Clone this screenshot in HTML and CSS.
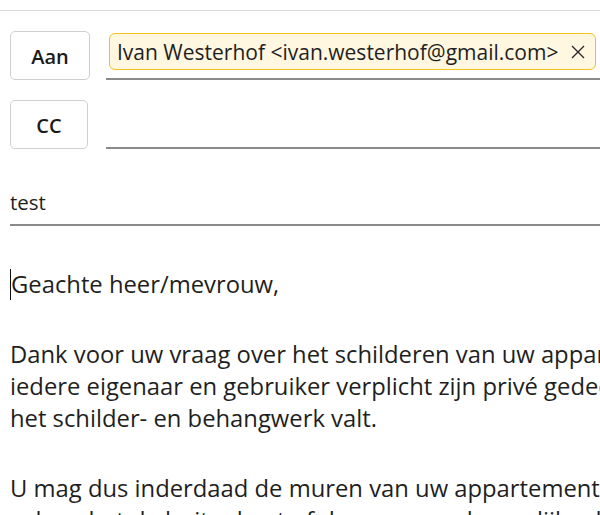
FILE: index.html
```html
<!DOCTYPE html>
<html lang="nl">
<head>
<meta charset="utf-8">
<link rel="stylesheet" href="styles.css">
</head>
<body>
<div class="topbar"></div>
<div class="recipients">
  <div class="row">
    <button class="label label-to">Aan</button>
    <div class="field">
      <span class="chip">
        <span class="chip-text">Ivan Westerhof &lt;ivan.westerhof@gmail.com&gt;</span>
        <svg class="chip-x" width="14" height="14" viewBox="0 0 14 14"><path d="M1 1 L13 13 M13 1 L1 13" stroke="#2b2b2b" stroke-width="1.4" fill="none"/></svg>
      </span>
    </div>
  </div>
  <div class="row">
    <button class="label label-cc">CC</button>
    <div class="field"></div>
  </div>
</div>
<div class="subject">test</div>
<div class="body">
  <p><span class="caret"></span>Geachte heer/mevrouw,</p>
  <p>Dank voor uw vraag over het schilderen van uw appartement. Volgens het splitsingsreglement is<br>iedere eigenaar en gebruiker verplicht zijn privé gedeelte goed te onderhouden, waaronder ook<br>het schilder- en behangwerk valt.</p>
  <p>U mag dus inderdaad de muren van uw appartement zelf schilderen in een kleur naar keuze,<br>zolang het de buitenkant of de gemeenschappelijke delen niet betreft.</p>
</div>
</body>
</html>
```
FILE: styles.css
```css
html, body {
  margin: 0;
  padding: 0;
  background: #ffffff;
  overflow: hidden;
}
body {
  width: 600px;
  height: 515px;
  font-family: "Open Sans", "Noto Sans", sans-serif;
  color: #1f1f1f;
}
.topbar {
  height: 10px;
  border-bottom: 1px solid #dadada;
}
.recipients {
  display: flex;
  flex-direction: column;
  gap: 20px;
  padding: 20px 0 0 10px;
}
.row {
  display: flex;
  height: 49px;
}
.label {
  box-sizing: border-box;
  height: 49px;
  background: #ffffff;
  border: 1px solid #cfcfcf;
  border-radius: 5px;
  font-family: "Open Sans", sans-serif;
  font-weight: 600;
  font-size: 20px;
  color: #1a1a1a;
  padding: 2px 0 0 0;
}
.label-to { width: 80px; }
.label-cc { width: 78px; }
.field {
  flex: 1;
  margin-left: 16px;
  border-bottom: 2px solid #8a8a8a;
  display: flex;
  align-items: flex-start;
  padding: 2px 0 0 3px;
  white-space: nowrap;
}
.label-cc + .field { margin-left: 18px; }
.chip {
  box-sizing: border-box;
  height: 37px;
  width: 487px;
  display: flex;
  align-items: center;
  justify-content: space-between;
  padding: 0 10px 0 7px;
  background: #fff7df;
  border: 1.5px solid #f2c21b;
  border-radius: 6px;
  font-size: 21px;
  color: #1f1f1f;
}
.chip-x { flex: none; }
.subject {
  margin: 39px 0 0 10px;
  padding-bottom: 8px;
  font-size: 20.5px;
  line-height: 28px;
  border-bottom: 2px solid #8a8a8a;
}
.body {
  padding: 42px 0 0 10px;
  font-size: 23.8px;
  line-height: 32px;
  white-space: nowrap;
  overflow: hidden;
}
.body p {
  margin: 0 0 38px 0;
}
.caret {
  display: inline-block;
  width: 1px;
  height: 31px;
  background: #111;
  vertical-align: -7px;
}
```
